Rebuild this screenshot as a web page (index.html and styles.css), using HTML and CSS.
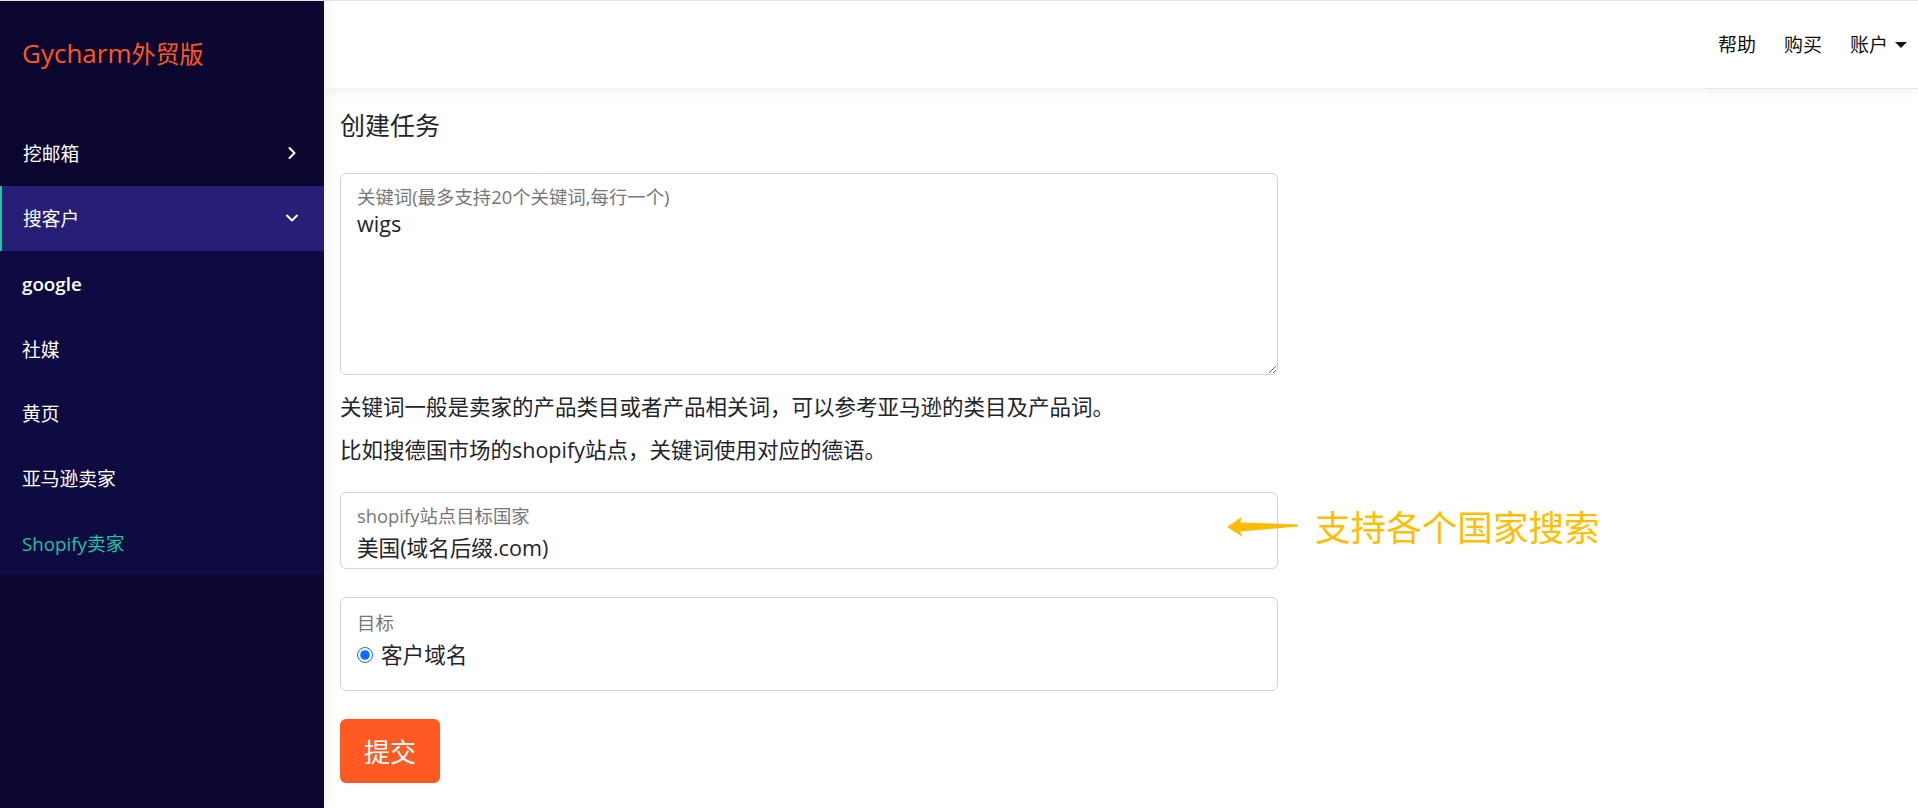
FILE: index.html
```html
<!DOCTYPE html>
<html lang="zh-CN">
<head>
<meta charset="utf-8">
<title>Gycharm外贸版 - 创建任务</title>
<link rel="stylesheet" href="styles.css">
</head>
<body>
<div class="app">
  <aside class="sidebar">
    <div class="brand"><span class="brand-en">Gycharm</span><span class="brand-cn">外贸版</span></div>
    <nav class="menu">
      <div class="menu-item">
        <span>挖邮箱</span>
        <svg class="chev" width="10" height="14" viewBox="0 0 10 14"><path d="M2.5 2 L7.5 7 L2.5 12" fill="none" stroke="#fff" stroke-width="2" stroke-linecap="round" stroke-linejoin="round"/></svg>
      </div>
      <div class="menu-item active">
        <span>搜客户</span>
        <svg class="chev" width="14" height="10" viewBox="0 0 14 10"><path d="M2 2.5 L7 7.5 L12 2.5" fill="none" stroke="#fff" stroke-width="2" stroke-linecap="round" stroke-linejoin="round"/></svg>
      </div>
      <div class="submenu">
        <div class="sub-item latin">google</div>
        <div class="sub-item">社媒</div>
        <div class="sub-item">黄页</div>
        <div class="sub-item">亚马逊卖家</div>
        <div class="sub-item current">Shopify卖家</div>
      </div>
    </nav>
  </aside>
  <div class="main">
    <header class="topbar">
      <nav class="topnav">
        <a class="nav-link">帮助</a>
        <a class="nav-link">购买</a>
        <a class="nav-link">账户<span class="caret"></span></a>
      </nav>
    </header>
    <section class="content">
      <h5 class="title">创建任务</h5>
      <div class="field field-area">
        <textarea class="control textarea" id="kw">wigs</textarea>
        <label class="float-label" for="kw">关键词(最多支持20个关键词,每行一个)</label>
      </div>
      <div class="hint">
        <p>关键词一般是卖家的产品类目或者产品相关词，可以参考亚马逊的类目及产品词。</p>
        <p>比如搜德国市场的shopify站点，关键词使用对应的德语。</p>
      </div>
      <div class="field field-select">
        <select class="control select" id="country"><option>美国(域名后缀.com)</option></select>
        <label class="float-label" for="country">shopify站点目标国家</label>
        <div class="annotation">
          <svg class="arrow" width="76" height="26" viewBox="0 0 76 26"><polygon points="2,13 17,3 15,8.5 73,10.5 73,12.5 15,17.5 18,23" fill="#ffbb00"/></svg>
          <span class="annotation-text">支持各个国家搜索</span>
        </div>
      </div>
      <div class="target-box">
        <div class="target-label">目标</div>
        <label class="radio-row"><input type="radio" name="target" checked><span>客户域名</span></label>
      </div>
      <button class="submit">提交</button>
    </section>
  </div>
</div>
</body>
</html>
```
FILE: styles.css
```css
* { box-sizing: border-box; }
html, body { margin: 0; padding: 0; }
body {
  border-top: 1px solid #e2e2e2;
  font-family: "Open Sans", "Noto Sans CJK SC", sans-serif;
  color: #212529;
  background: #fff;
  overflow: hidden;
}
.app {
  display: flex;
  height: 807px;
}
.sidebar {
  width: 324px;
  flex: 0 0 324px;
  background: #0b0731;
  color: #fff;
  position: relative;
  z-index: 2;
  box-shadow: 3px 0 14px rgba(0,0,0,0.06);
}
.brand {
  height: 120px;
  padding: 33px 0 0 22px;
  line-height: 38px;
  color: #ff5722;
  white-space: nowrap;
}
.brand-en { font-size: 26px; }
.brand-cn { font-size: 24px; }
.menu-item {
  height: 65px;
  display: flex;
  align-items: center;
  justify-content: space-between;
  padding: 0 27px 2px 23px;
  font-size: 18.75px;
}
.menu-item.active {
  background: #271f75;
  border-left: 2px solid #20c4a2;
  padding-left: 21px;
  padding-right: 25px;
}
.submenu { background: #0e0a42; }
.sub-item {
  height: 64.8px;
  display: flex;
  align-items: center;
  padding-left: 22px;
  font-size: 18.75px;
  font-weight: 400;
}
.sub-item.latin { font-weight: 600; }
.sub-item.current { color: #23c2a2; font-weight: 400; }

.main {
  flex: 1;
  display: flex;
  flex-direction: column;
  min-width: 0;
}
.topbar {
  height: 87px;
  flex: 0 0 87px;
  background: #fff;
  display: flex;
  justify-content: flex-end;
  box-shadow: 0 3px 12px rgba(0,0,0,0.06);
  position: relative;
  z-index: 1;
}
.topnav {
  display: flex;
  align-items: center;
  gap: 28px;
  padding: 0 11px 0 13px;
  border-bottom: 1px solid #e4e4e4;
  height: 88px;
}
.nav-link {
  font-size: 19px;
  color: #111;
  display: flex;
  align-items: center;
  line-height: 24px;
}
.caret {
  display: inline-block;
  margin-left: 7px;
  width: 0;
  height: 0;
  border-left: 6px solid transparent;
  border-right: 6px solid transparent;
  border-top: 6px solid #111;
}
.content {
  padding: 22px 16px 0;
}
.title {
  margin: 0 0 33px;
  font-size: 25px;
  line-height: 30px;
  font-weight: 400;
}
.field {
  position: relative;
  width: 938px;
}
.control {
  display: block;
  width: 100%;
  border: 1px solid #ced4da;
  border-radius: 6px;
  font-family: inherit;
  font-size: 21.6px;
  line-height: 30px;
  color: #212529;
  background: #fff;
  padding: 35px 15px 0 16px;
  margin: 0;
  outline: none;
}
.textarea {
  height: 202px;
  resize: vertical;
}
.select {
  height: 77px;
  appearance: none;
  -webkit-appearance: none;
}
.float-label {
  position: absolute;
  left: 17px;
  top: 14px;
  font-size: 18.4px;
  line-height: 20px;
  color: #777;
  pointer-events: none;
}
.hint {
  margin: 11px 0 21px;
  font-size: 21.5px;
  line-height: 42.5px;
}
.hint p { margin: 0; }
.annotation {
  position: absolute;
  left: 885px;
  top: 13px;
  height: 44px;
  display: flex;
  align-items: center;
  gap: 14px;
  white-space: nowrap;
}
.arrow { display: block; }
.annotation-text {
  font-size: 35.6px;
  line-height: 44px;
  color: #ffbe00;
}
.target-box {
  margin-top: 28px;
  width: 938px;
  height: 94px;
  border: 1px solid #ced4da;
  border-radius: 6px;
  padding: 14px 16px 0 16px;
}
.target-label {
  font-size: 18.4px;
  line-height: 22px;
  color: #777;
}
.radio-row {
  margin-top: 6px;
  display: flex;
  align-items: center;
  gap: 8px;
  font-size: 21.6px;
  line-height: 30px;
}
.radio-row input {
  margin: 0;
  width: 16px;
  height: 16px;
  accent-color: #0d6efd;
}
.submit {
  margin-top: 28px;
  width: 100px;
  height: 64px;
  border: 0;
  border-radius: 6px;
  background: #ff5a24;
  color: #fff;
  font-family: inherit;
  font-size: 26px;
  padding: 0;
}
```
